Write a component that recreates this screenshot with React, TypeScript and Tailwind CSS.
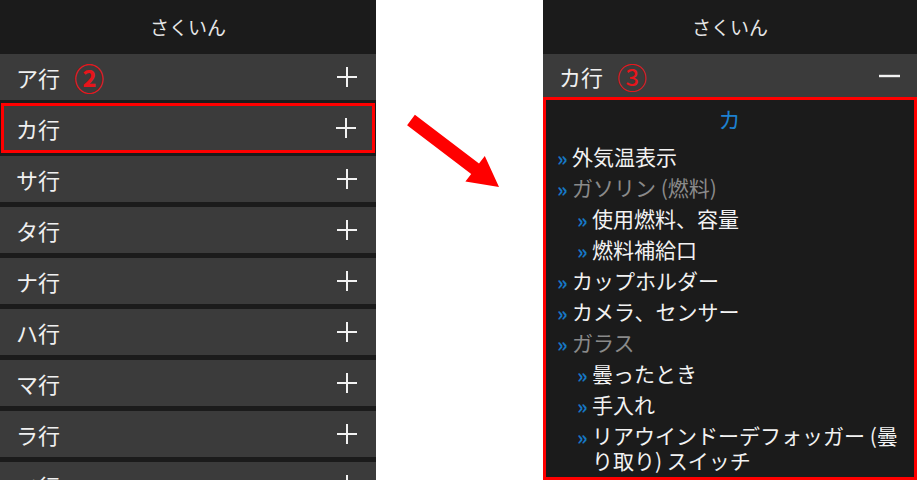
const rows = ["ア行", "カ行", "サ行", "タ行", "ナ行", "ハ行", "マ行", "ラ行", "ワ行"];

const items = [
    { t: "外気温表示", sub: false, dim: false },
    { t: "ガソリン (燃料)", sub: false, dim: true },
    { t: "使用燃料、容量", sub: true, dim: false },
    { t: "燃料補給口", sub: true, dim: false },
    { t: "カップホルダー", sub: false, dim: false },
    { t: "カメラ、センサー", sub: false, dim: false },
    { t: "ガラス", sub: false, dim: true },
    { t: "曇ったとき", sub: true, dim: false },
    { t: "手入れ", sub: true, dim: false },
    { t: "リアウインドーデフォッガー (曇り取り) スイッチ", sub: true, dim: false },
];

function Plus() {
    return (
        <svg width="20" height="20" viewBox="0 0 20 20" className="shrink-0">
            <path d="M10 0V20M0 10H20" stroke="#f2f2f2" strokeWidth="2" />
        </svg>
    );
}

function Minus() {
    return (
        <svg width="21" height="4" viewBox="0 0 21 4" className="shrink-0">
            <path d="M0 2H21" stroke="#f2f2f2" strokeWidth="2.4" />
        </svg>
    );
}

function Header() {
    return (
        <header className="flex items-center justify-center h-[54px] shrink-0 text-[19px] text-[#e6e6e6]">
            さくいん
        </header>
    );
}

export default function App() {
    return (
        <div className="flex w-[917px] h-[480px] overflow-hidden bg-white font-['Noto_Sans_CJK_JP','Noto_Sans',sans-serif]">
            {/* left: index list, カ行 selected */}
            <section className="flex flex-col w-[376px] h-full shrink-0 bg-[#1b1b1b] overflow-hidden">
                <Header />
                {rows.map((r, i) => {
                    const sel = i === 1;
                    return (
                        <div
                            key={r}
                            className={
                                sel
                                    ? "flex items-center justify-between shrink-0 h-[50px] mt-[3px] mx-[1px] pl-[12px] pr-[16px] bg-[#3b3b3b] border-[3px] border-[#ff0000]"
                                    : i === 2
                                        ? "flex items-center justify-between shrink-0 h-[46px] mt-[3px] pl-4 pr-[19px] bg-[#3b3b3b]"
                                        : i === 0
                                            ? "flex items-center justify-between shrink-0 h-[46px] pl-4 pr-[19px] bg-[#3b3b3b]"
                                            : "flex items-center justify-between shrink-0 h-[46px] mt-[5px] pl-4 pr-[19px] bg-[#3b3b3b]"
                            }
                        >
                            <div className="flex items-center gap-[14px]">
                                <span className="text-[22px] leading-none text-[#f0f0f0]">{r}</span>
                                {i === 0 && <span className="text-[30px] leading-none font-bold text-[#e8151b]">②</span>}
                            </div>
                            <Plus />
                        </div>
                    );
                })}
            </section>

            {/* arrow */}
            <div className="w-[167px] shrink-0">
                <svg width="167" height="100" viewBox="0 0 167 100" className="block mt-[100px]">
                    <polygon points="38.9,14.8 103,63.6 108.8,56.1 123,87 89.4,81.5 95.2,74 31.1,25.2" fill="#ff0000" />
                </svg>
            </div>

            {/* right: カ行 expanded */}
            <section className="flex flex-col w-[374px] h-full shrink-0 bg-[#1b1b1b]">
                <Header />
                <div className="flex items-center justify-between h-[43px] shrink-0 pl-4 pr-[17px] bg-[#3b3b3b]">
                    <div className="flex items-center gap-[14px]">
                        <span className="text-[22px] leading-none text-[#f0f0f0]">カ行</span>
                        <span className="text-[30px] leading-none text-[#e8151b]">③</span>
                    </div>
                    <Minus />
                </div>
                <div className="flex-1 border-[3px] border-[#ff0000] pl-[11px] pr-[12px] pt-[3px]">
                    <div className="h-[30px] text-center text-[22px] leading-[30px] text-[#1d80d0]">カ</div>
                    <ul className="flex flex-col gap-[6px] mt-[11px]">
                        {items.map((it) => (
                            <li key={it.t} className={it.sub ? "flex items-start ml-[20px]" : "flex items-start"}>
                                <span className="w-[15px] shrink-0 text-[20px] leading-[25px] font-bold text-[#1777c4] translate-y-[1px]">»</span>
                                <span className={it.dim ? "text-[21px] leading-[25px] text-[#8a8a8a]" : "text-[21px] leading-[25px] text-[#f2f2f2]"}>
                                    {it.t}
                                </span>
                            </li>
                        ))}
                    </ul>
                </div>
            </section>
        </div>
    );
}
